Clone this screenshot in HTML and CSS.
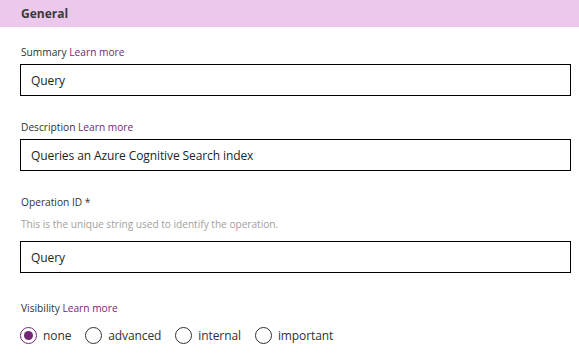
FILE: index.html
```html
<!DOCTYPE html>
<html lang="en">
<head>
  <meta charset="UTF-8">
  <meta name="viewport" content="width=device-width, initial-scale=1.0">
  <title>General</title>
  <link rel="stylesheet" href="styles.css">
</head>
<body>
  <div class="section-header">General</div>

  <div class="form">
    <div class="field">
      <label class="field-label">Summary <a href="#" class="learn">Learn more</a></label>
      <input type="text" class="text-input" value="Query">
    </div>

    <div class="field">
      <label class="field-label">Description <a href="#" class="learn">Learn more</a></label>
      <input type="text" class="text-input" value="Queries an Azure Cognitive Search index">
    </div>

    <div class="field">
      <label class="field-label">Operation ID *</label>
      <div class="help-text">This is the unique string used to identify the operation.</div>
      <input type="text" class="text-input spaced" value="Query">
    </div>

    <div class="field">
      <label class="field-label">Visibility <a href="#" class="learn">Learn more</a></label>
      <div class="radio-group">
        <label class="radio"><span class="circle checked"></span>none</label>
        <label class="radio"><span class="circle"></span>advanced</label>
        <label class="radio"><span class="circle"></span>internal</label>
        <label class="radio"><span class="circle"></span>important</label>
      </div>
    </div>
  </div>
</body>
</html>
```

FILE: styles.css
```css
body {
  font-family: "Open Sans", "Noto Sans", Arial, sans-serif;
  margin: 0;
  padding: 0;
  background-color: #ffffff;
  color: #323130;
}
.section-header {
  background-color: #ecc8ec;
  height: 27px;
  line-height: 27px;
  padding-left: 21px;
  font-size: 12px;
  font-weight: 700;
  color: #3b3a39;
}
.form {
  padding: 17px 8px 0 20px;
}
.field {
  margin-bottom: 23px;
}
.field:nth-child(3) {
  margin-bottom: 27px;
}
.field-label {
  display: block;
  height: 16px;
  line-height: 16px;
  font-size: 10.2px;
  padding-left: 1px;
  margin-bottom: 4px;
  color: #323130;
}
.learn {
  color: #742774;
  text-decoration: none;
}
.help-text {
  font-size: 10.1px;
  line-height: 16px;
  color: #a19f9d;
  padding-left: 1px;
  margin-top: 6px;
}
.text-input {
  display: block;
  box-sizing: border-box;
  width: 100%;
  height: 32px;
  border: 1px solid #000000;
  border-radius: 0;
  padding: 0 10px;
  font-family: inherit;
  font-size: 12px;
  letter-spacing: -0.1px;
  color: #201f1e;
  outline: none;
}
.text-input.spaced {
  margin-top: 9px;
}
.radio-group {
  display: flex;
  gap: 14px;
  margin-top: 8px;
}
.radio {
  display: flex;
  align-items: center;
  gap: 6px;
  font-size: 12px;
  letter-spacing: -0.1px;
  color: #323130;
  height: 22px;
}
.circle {
  box-sizing: border-box;
  width: 17px;
  height: 17px;
  border: 1px solid #323130;
  border-radius: 50%;
  display: flex;
  align-items: center;
  justify-content: center;
}
.circle.checked {
  border-color: #742774;
}
.circle.checked::after {
  content: "";
  width: 9px;
  height: 9px;
  border-radius: 50%;
  background-color: #742774;
}
```
